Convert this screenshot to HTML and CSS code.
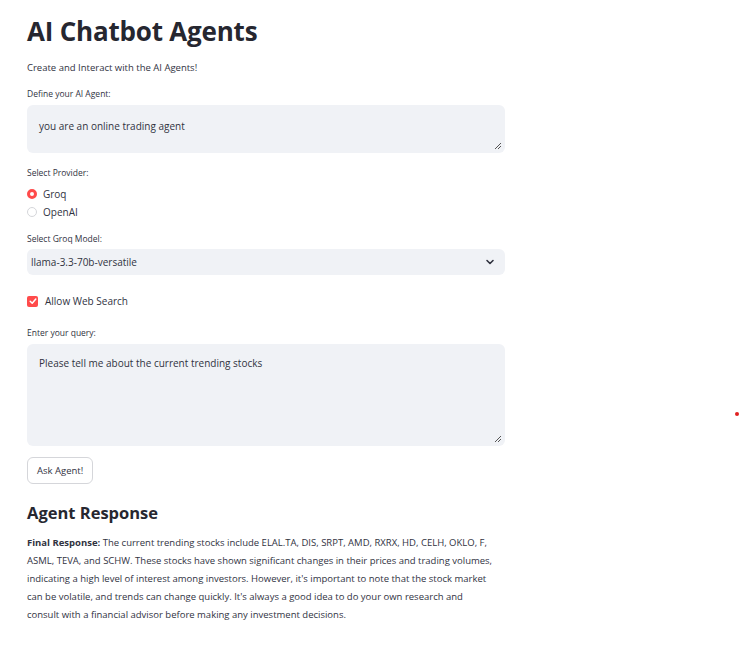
FILE: index.html
```html
<!DOCTYPE html>
<html>
<head>
<meta charset="utf-8">
<link rel="stylesheet" href="styles.css">
</head>
<body>
<main class="app">
  <h1 class="title">AI Chatbot Agents</h1>
  <p class="subtitle">Create and Interact with the AI Agents!</p>

  <div class="field field-agent">
    <div class="label">Define your AI Agent:</div>
    <div class="textarea ta-small">you are an online trading agent<span class="grip"></span></div>
  </div>

  <div class="field field-provider">
    <div class="label">Select Provider:</div>
    <div class="radios">
      <div class="radio"><span class="dot on"></span>Groq</div>
      <div class="radio"><span class="dot"></span>OpenAI</div>
    </div>
  </div>

  <div class="field field-model">
    <div class="label">Select Groq Model:</div>
    <div class="select">llama-3.3-70b-versatile
      <svg class="chev" width="10" height="10" viewBox="0 0 10 10"><path d="M2 3.5 L5 6.5 L8 3.5" fill="none" stroke="#31333f" stroke-width="1.6" stroke-linecap="round" stroke-linejoin="round"/></svg>
    </div>
  </div>

  <div class="check">
    <span class="box"><svg width="10" height="10" viewBox="0 0 10 10"><path d="M2.2 5.2 L4.2 7.2 L7.8 3" fill="none" stroke="#fff" stroke-width="1.5" stroke-linecap="round" stroke-linejoin="round"/></svg></span>
    Allow Web Search
  </div>

  <div class="field field-query">
    <div class="label">Enter your query:</div>
    <div class="textarea ta-large">Please tell me about the current trending stocks<span class="grip"></span></div>
  </div>

  <button class="btn">Ask Agent!</button>

  <h2 class="h2">Agent Response</h2>
  <p class="resp"><b>Final Response:</b> The current trending stocks include ELAL.TA, DIS, SRPT, AMD, RXRX, HD, CELH, OKLO, F,<br>ASML, TEVA, and SCHW. These stocks have shown significant changes in their prices and trading volumes,<br>indicating a high level of interest among investors. However, it's important to note that the stock market<br>can be volatile, and trends can change quickly. It's always a good idea to do your own research and<br>consult with a financial advisor before making any investment decisions.</p>
</main>
<span class="reddot"></span>
</body>
</html>
```
FILE: styles.css
```css
html, body {
  margin: 0;
  padding: 0;
  background: #ffffff;
}
body {
  font-family: "Open Sans", "Noto Sans", sans-serif;
  color: #31333f;
  width: 740px;
  height: 656px;
  position: relative;
  overflow: hidden;
}
.app {
  width: 478px;
  padding: 14px 0 0 27px;
}
.title {
  margin: 0;
  font-size: 26px;
  line-height: 34px;
  font-weight: 700;
  letter-spacing: -0.2px;
  color: #262730;
}
.subtitle {
  margin: 13px 0 0 0;
  font-size: 9.5px;
  line-height: 14px;
}
.label {
  font-size: 8.5px;
  line-height: 12px;
  color: #31333f;
}
.field-agent { margin-top: 13px; }
.textarea {
  position: relative;
  background: #f0f2f6;
  border-radius: 6px;
  margin-top: 5px;
  box-sizing: border-box;
  padding: 14px 12px;
  font-size: 10px;
  line-height: 14px;
}
.ta-small { height: 48px; }
.ta-large { height: 102px; padding-top: 12px; }
.grip {
  position: absolute;
  right: 4px;
  bottom: 4px;
  width: 6px;
  height: 6px;
  background: linear-gradient(135deg, transparent 45%, #555 45%, #555 55%, transparent 55%, transparent 70%, #555 70%, #555 80%, transparent 80%);
}
.field-provider { margin-top: 14px; }
.radios { margin-top: 6px; }
.radio {
  display: flex;
  align-items: center;
  gap: 6px;
  font-size: 10px;
  line-height: 18px;
}
.dot {
  width: 10px;
  height: 10px;
  box-sizing: border-box;
  border-radius: 50%;
  border: 1px solid #d5d6da;
  background: #fff;
}
.dot.on {
  border: 3px solid #ff4b4b;
}
.field-model { margin-top: 12px; }
.select {
  margin-top: 4px;
  height: 26px;
  background: #f0f2f6;
  border-radius: 6px;
  display: flex;
  align-items: center;
  justify-content: space-between;
  padding: 0 10px 0 4px;
  font-size: 10px;
}
.check {
  margin-top: 19px;
  display: flex;
  align-items: center;
  gap: 7px;
  font-size: 10px;
  line-height: 14px;
}
.box {
  width: 11px;
  height: 11px;
  border-radius: 2px;
  background: #ff4b4b;
  display: flex;
  align-items: center;
  justify-content: center;
}
.field-query { margin-top: 19px; }
.btn {
  display: block;
  margin-top: 11px;
  height: 27px;
  padding: 0 9px;
  border: 1px solid #d5d6da;
  border-radius: 6px;
  background: #fff;
  font-family: inherit;
  font-size: 9.5px;
  color: #31333f;
}
.h2 {
  margin: 17px 0 0 0;
  font-size: 16.5px;
  line-height: 24px;
  font-weight: 700;
  color: #262730;
}
.resp {
  margin: 9px 0 0 0;
  font-size: 9.5px;
  line-height: 18px;
  color: #31333f;
  white-space: nowrap;
}
.reddot {
  position: absolute;
  left: 735px;
  top: 412px;
  width: 4px;
  height: 4px;
  border-radius: 50%;
  background: #e02020;
}
```
